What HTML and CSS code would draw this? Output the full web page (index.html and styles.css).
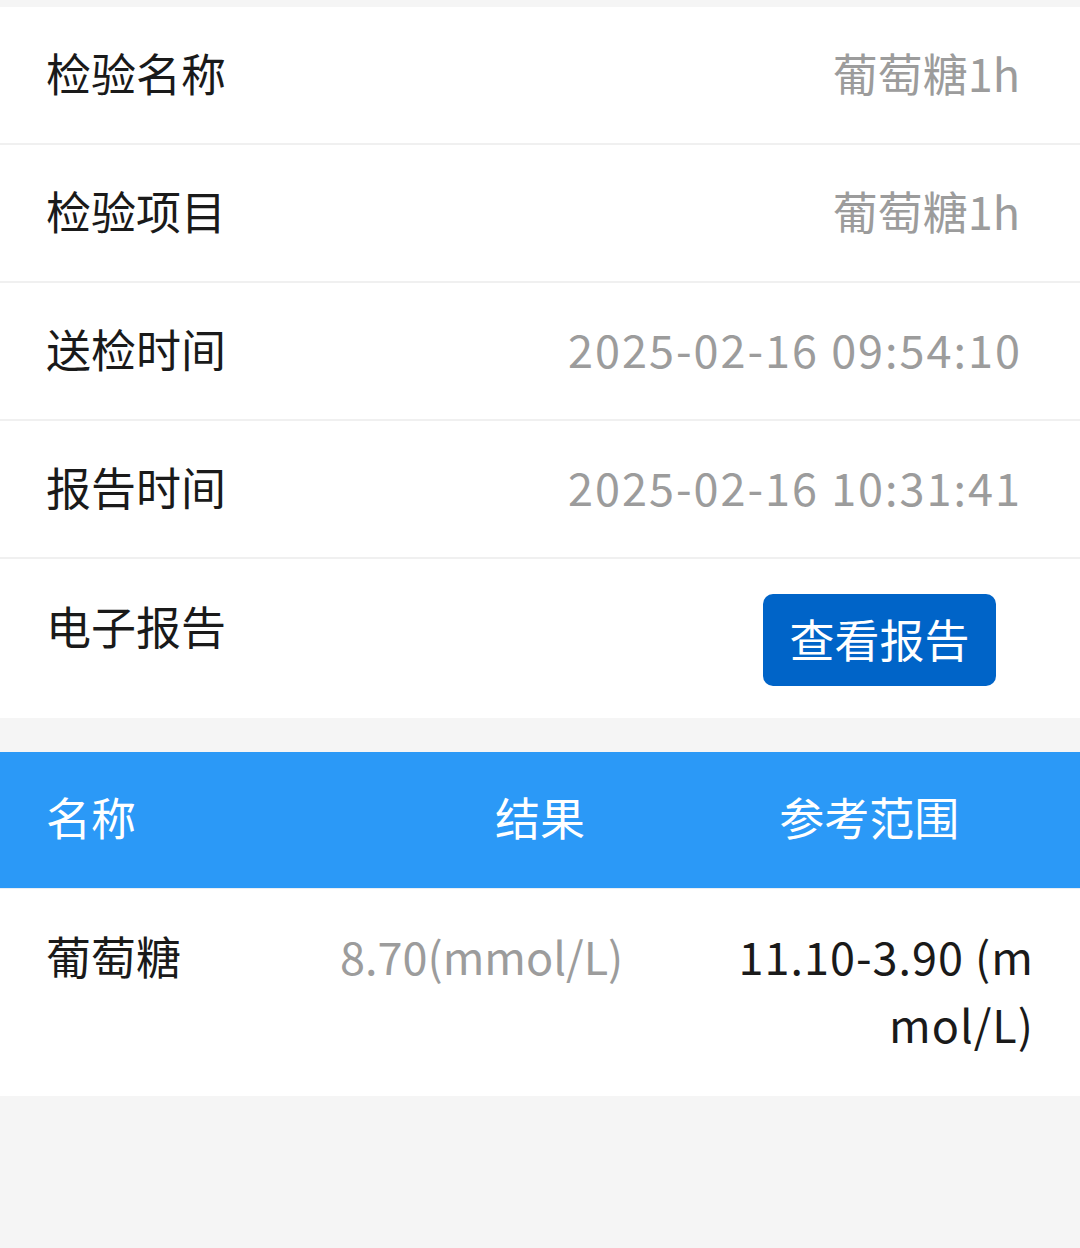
FILE: index.html
```html
<html>
<head>
<meta charset="utf-8">
<link rel="stylesheet" href="styles.css">
</head>
<body>

<div class="info">
  <div class="row"><span class="label">检验名称</span><span class="value">葡萄糖1h</span></div>
  <div class="row"><span class="label">检验项目</span><span class="value">葡萄糖1h</span></div>
  <div class="row"><span class="label">送检时间</span><span class="value date">2025-02-16 09:54:10</span></div>
  <div class="row"><span class="label">报告时间</span><span class="value date">2025-02-16 10:31:41</span></div>
  <div class="row report"><span class="label">电子报告</span><a class="btn" href="#">查看报告</a></div>
</div>

<div class="result">
  <div class="thead">
    <span class="th th-name">名称</span>
    <span class="th">结果</span>
    <span class="th">参考范围</span>
  </div>
  <div class="trow">
    <span class="td td-name">葡萄糖</span>
    <span class="td td-val">8.70(mmol/L)</span>
    <span class="td td-range">11.10-3.90 (mmol/L)</span>
  </div>
</div>

</body>
</html>
```

FILE: styles.css
```css
body {
 margin: 0;
 padding-top: 7px;
 background: #f5f5f5;
 color: #1a1a1a;
 font-family: "Noto Sans CJK SC", "Noto Sans", sans-serif;
 font-size: 45px;
}

.info {background: #fff}
.row {
 display: flex;
 justify-content: space-between;
 align-items: center;
 height: 138px;
 padding: 0 60px 4px 46px;
 box-sizing: border-box;
 border-bottom: 2px solid #f0f0f0;
 line-height: 60px;
}
.value {color: #9c9c9c}
.date {letter-spacing: 2px; margin-right: -2px}

.row.report {
 height: 159px;
 align-items: flex-start;
 border-bottom: none;
 padding-bottom: 0;
 padding-right: 84px;
}
.row.report .label {padding-top: 37px}
.btn {
 margin-top: 35px;
 width: 233px;
 height: 92px;
 line-height: 90px;
 text-align: center;
 background: #0064c8;
 color: #fff;
 border-radius: 10px;
 text-decoration: none;
}

.result {margin-top: 34px; background: #fff}
.thead {
 display: grid;
 grid-template-columns: 1fr 1fr 1fr;
 align-items: center;
 height: 136px;
 box-sizing: border-box;
 padding: 0 46px 7px 46px;
 background: #2b99f7;
 color: #fff;
}
.th {text-align: center}
.th-name {text-align: left}

.trow {
 display: grid;
 grid-template-columns: 294px 1fr 300px;
 padding: 33px 46px 38px 46px;
 line-height: 68px;
 border-top: 1px solid #e8eef5;
}
.td-val {color: #9c9c9c}
.td-range {text-align: right; word-break: break-all; letter-spacing: 1px}
```
